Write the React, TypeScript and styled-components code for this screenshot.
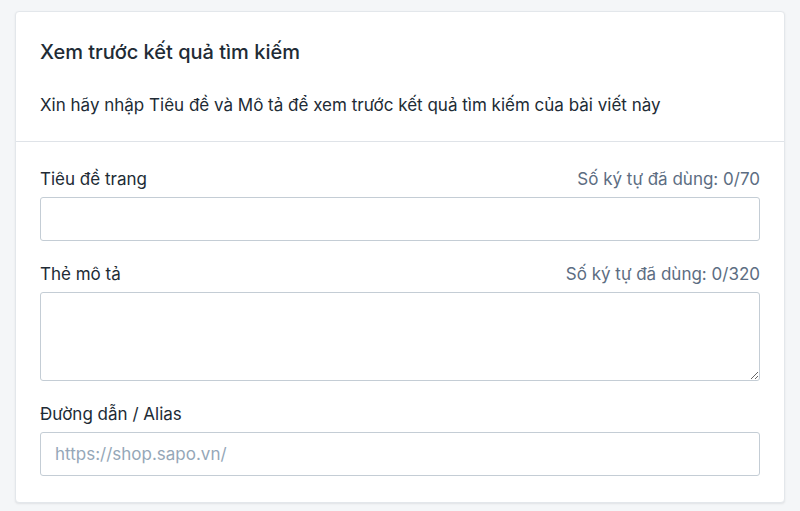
import React from "react";
import styled, { createGlobalStyle } from "styled-components";

const GlobalStyle = createGlobalStyle`
    html, body {
        margin: 0;
        padding: 0;
        background: #f4f6f8;
        font-family: Inter, "Noto Sans", sans-serif;
        color: #212b35;
    }
`;

interface Field {
    label: string;
    limit: number;
    multiline?: boolean;
    placeholder?: string;
}

const fields: Field[] = [
    { label: "Tiêu đề trang", limit: 70 },
    { label: "Thẻ mô tả", limit: 320, multiline: true },
    { label: "Đường dẫn / Alias", limit: 0, placeholder: "https://shop.sapo.vn/" },
];

export default function App() {
    return (
        <>
            <GlobalStyle />
            <Page>
                <Card>
                    <Header>
                        <Title>Xem trước kết quả tìm kiếm</Title>
                        <Description>
                            Xin hãy nhập Tiêu đề và Mô tả để xem trước kết quả tìm kiếm của bài viết này
                        </Description>
                    </Header>
                    <Body>
                        {fields.map((f) => (
                            <FieldGroup key={f.label}>
                                <LabelRow>
                                    <Label>{f.label}</Label>
                                    {f.limit > 0 && <Counter>Số ký tự đã dùng: 0/{f.limit}</Counter>}
                                </LabelRow>
                                {f.multiline ? (
                                    <TextArea />
                                ) : (
                                    <Input type="text" placeholder={f.placeholder} />
                                )}
                            </FieldGroup>
                        ))}
                    </Body>
                </Card>
            </Page>
        </>
    );
}

const Page = styled.div`
    padding: 11px 15px 8px;
`;

const Card = styled.div`
    background: #fff;
    border: 1px solid #e3e7eb;
    border-radius: 4px;
    box-shadow: 0 1px 2px rgba(63, 63, 68, 0.1);
`;

const Header = styled.div`
    padding: 26px 24px 24px;
    border-bottom: 1px solid #dfe3e8;
`;

const Title = styled.h2`
    margin: 0;
    font-size: 20px;
    font-weight: 500;
    line-height: 28px;
`;

const Description = styled.p`
    margin: 27px 0 0;
    font-size: 17px;
    line-height: 24px;
`;

const Body = styled.div`
    padding: 26px 24px 26px;
    display: flex;
    flex-direction: column;
    gap: 22px;
`;

const FieldGroup = styled.div`
    display: flex;
    flex-direction: column;
`;

const LabelRow = styled.div`
    display: flex;
    justify-content: space-between;
    align-items: center;
    margin-bottom: 7px;
    line-height: 22px;
`;

const Label = styled.label`
    font-size: 17px;
`;

const Counter = styled.span`
    font-size: 17px;
    color: #5c6d82;
`;

const inputBase = `
    box-sizing: border-box;
    width: 100%;
    border: 1px solid #c4cdd5;
    border-radius: 3px;
    font-family: Inter, "Noto Sans", sans-serif;
    font-size: 17px;
    padding: 0 14px;
    color: #212b35;
    background: #fff;
    outline: none;
    &::placeholder {
        color: #95a7b8;
    }
`;

const Input = styled.input`
    ${inputBase}
    height: 44px;
`;

const TextArea = styled.textarea`
    ${inputBase}
    height: 89px;
    padding: 10px 14px;
    resize: vertical;
    display: block;
`;
